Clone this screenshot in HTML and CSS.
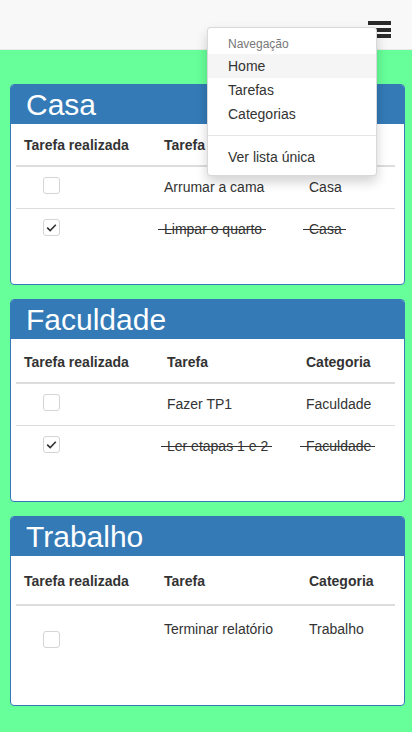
FILE: index.html
```html
<!DOCTYPE html>
<html lang="pt-BR">
<head>
<meta charset="utf-8">
<title>Tarefas</title>
<link rel="stylesheet" href="styles.css">
</head>
<body>
<header class="navbar">
  <button class="menu-toggle" aria-label="Menu">
    <svg width="23" height="18" viewBox="0 0 23 18"><rect x="0" y="0" width="23" height="4"/><rect x="0" y="7" width="23" height="4"/><rect x="0" y="13" width="23" height="4"/></svg>
  </button>
  <ul class="dropdown">
    <li class="dropdown-header">Navegação</li>
    <li class="dropdown-item active">Home</li>
    <li class="dropdown-item">Tarefas</li>
    <li class="dropdown-item">Categorias</li>
    <li class="divider"></li>
    <li class="dropdown-item">Ver lista única</li>
  </ul>
</header>
<main class="content">
  <section class="panel">
    <h2 class="panel-title">Casa</h2>
    <div class="panel-body">
      <table class="tasks">
        <thead><tr><th class="col-done">Tarefa realizada</th><th class="col-task">Tarefa</th><th>Categoria</th></tr></thead>
        <tbody>
          <tr><td><span class="check"></span></td><td>Arrumar a cama</td><td>Casa</td></tr>
          <tr><td><span class="check"><svg width="15" height="15" viewBox="0 0 15 15"><path d="M3.2 7.6 L6.2 10.6 L11.8 4.8"/></svg></span></td><td><span class="strike">Limpar o quarto</span></td><td><span class="strike">Casa</span></td></tr>
        </tbody>
      </table>
    </div>
  </section>
  <section class="panel">
    <h2 class="panel-title">Faculdade</h2>
    <div class="panel-body">
      <table class="tasks tasks-alt">
        <thead><tr><th class="col-done">Tarefa realizada</th><th class="col-task">Tarefa</th><th>Categoria</th></tr></thead>
        <tbody>
          <tr><td><span class="check"></span></td><td>Fazer TP1</td><td>Faculdade</td></tr>
          <tr><td><span class="check"><svg width="15" height="15" viewBox="0 0 15 15"><path d="M3.2 7.6 L6.2 10.6 L11.8 4.8"/></svg></span></td><td><span class="strike">Ler etapas 1 e 2</span></td><td><span class="strike">Faculdade</span></td></tr>
        </tbody>
      </table>
    </div>
  </section>
  <section class="panel">
    <h2 class="panel-title">Trabalho</h2>
    <div class="panel-body">
      <table class="tasks tasks-tall">
        <thead><tr><th class="col-done">Tarefa realizada</th><th class="col-task">Tarefa</th><th>Categoria</th></tr></thead>
        <tbody>
          <tr class="row-tall"><td><span class="check"></span></td><td>Terminar relatório</td><td>Trabalho</td></tr>
        </tbody>
      </table>
    </div>
  </section>
</main>
</body>
</html>
```
FILE: styles.css
```css
html, body {
  margin: 0;
  background: #66ff99;
}
body {
  font-family: "Liberation Sans", Arial, Helvetica, sans-serif;
  font-size: 14px;
  line-height: 20px;
  color: #333;
  min-height: 732px;
}
.navbar {
  position: relative;
  box-sizing: border-box;
  height: 50px;
  background: #f8f8f8;
  border-bottom: 1px solid #e7e7e7;
  display: flex;
  justify-content: flex-end;
  align-items: flex-start;
  padding: 21px 21px 0 0;
}
.menu-toggle {
  display: block;
  width: 23px;
  height: 18px;
  padding: 0;
  border: 0;
  background: none;
  color: #2b2b2b;
}
.menu-toggle svg {
  display: block;
  fill: currentColor;
}
.dropdown {
  position: absolute;
  top: 27px;
  left: 207px;
  width: 170px;
  box-sizing: border-box;
  margin: 0;
  padding: 5px 0 6px;
  list-style: none;
  background: #fff;
  border: 1px solid rgba(0, 0, 0, 0.15);
  border-radius: 4px;
  box-shadow: 0 6px 12px rgba(0, 0, 0, 0.175);
  z-index: 10;
}
.dropdown-header {
  padding: 3px 20px 2px;
  font-size: 12px;
  line-height: 16px;
  color: #777;
}
.dropdown-item {
  padding: 3px 20px;
  line-height: 18px;
  color: #333;
  white-space: nowrap;
}
.dropdown-item.active {
  background: #f5f5f5;
}
.divider {
  height: 1px;
  margin: 9px 0;
  background: #e5e5e5;
}
.content {
  padding: 34px 7px 1px 10px;
}
.panel {
  background: #fff;
  border: 1px solid #337ab7;
  border-radius: 4px;
  margin-bottom: 14px;
  overflow: hidden;
}
.panel-title {
  margin: 0;
  padding: 3px 15px;
  background: #337ab7;
  color: #fff;
  font-size: 30px;
  font-weight: normal;
  line-height: 33px;
}
.panel-body {
  padding: 5px 9px 34px 5px;
}
.tasks {
  width: 100%;
  table-layout: fixed;
  border-collapse: separate;
  border-spacing: 0;
}
.tasks th {
  box-sizing: border-box;
  text-align: left;
  font-weight: bold;
  padding: 6px 8px 10px;
  border-bottom: 2px solid #ddd;
  vertical-align: bottom;
  white-space: nowrap;
}
.tasks td {
  padding: 10px 8px 11px;
  vertical-align: top;
  white-space: nowrap;
}
.tasks tbody tr + tr td {
  border-top: 1px solid #ddd;
}
.tasks .col-done {
  width: 140px;
}
.tasks .col-task {
  width: 145px;
}
.tasks-alt .col-done {
  width: 143px;
}
.tasks-alt .col-task {
  width: 139px;
}
.tasks-alt th {
  padding-top: 8px;
  padding-bottom: 10px;
}
.tasks-tall th {
  padding-top: 10px;
  padding-bottom: 13px;
}
.row-tall td {
  padding-top: 13px;
  padding-bottom: 23px;
}
.check {
  display: block;
  box-sizing: border-box;
  width: 17px;
  height: 17px;
  margin-left: 19px;
  border: 1px solid #d4d4d4;
  border-radius: 3px;
  background: #fff;
}
.row-tall .check {
  margin-top: 12px;
}
.check svg {
  display: block;
  fill: none;
  stroke: #333;
  stroke-width: 1.6;
}
.strike {
  padding: 0 4px 0 6px;
  margin-left: -6px;
  background: linear-gradient(#333, #333) no-repeat 0 8px / 100% 1px;
}
```
